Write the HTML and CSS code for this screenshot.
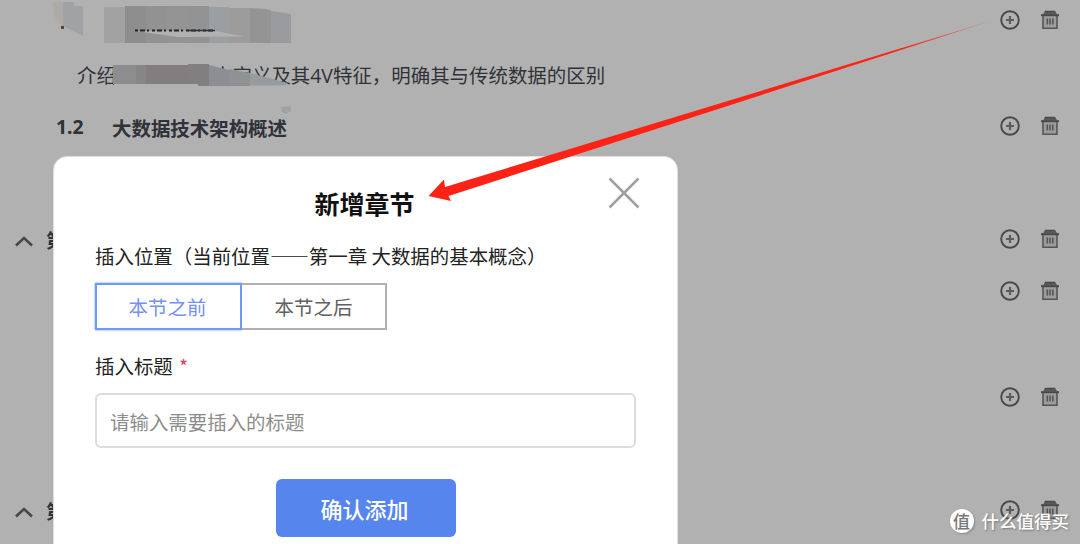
FILE: index.html
```html
<!DOCTYPE html>
<html lang="zh-CN">
<head>
  <meta charset="UTF-8">
  <title>新增章节</title>
  <link rel="stylesheet" href="styles.css">
</head>
<body>
  <svg class="defs">
    <symbol id="plus" viewBox="0 0 22 22">
      <circle cx="11" cy="11" r="8.8" fill="none" stroke="#484848" stroke-width="1.9"/>
      <path d="M11 7v8M7 11h8" stroke="#5c5c5c" stroke-width="2.2"/>
    </symbol>
    <symbol id="trash" viewBox="0 0 22 22">
      <path d="M4 7h14v12H4z" fill="#9c9c9c"/>
      <path d="M5.8 2h10.400l1.500 2.700 2.300.6v2H2v-2l2.700-.6z" fill="#585858"/>
      <path d="M6 2.300h9.800M2 6.300h18" stroke="#484848" stroke-width="1.300"/>
      <path d="M4 7v12.300h14V7M8.300 9.500v6M11 9.500v6M13.800 9.500v6" fill="none" stroke="#555" stroke-width="1.600"/>
    </symbol>
    <symbol id="up" viewBox="0 0 20 12">
      <path d="M2 10.500L10 3l8 7.500" fill="none" stroke="#484848" stroke-width="2.600"/>
    </symbol>
  </svg>

  <div class="outline">
    <div class="row first">
      <span class="num"></span>
      <span class="name"></span>
      <div class="tools"><svg><use href="#plus"/></svg><svg><use href="#trash"/></svg></div>
    </div>
    <div class="row desc">介绍大数据的基本定义及其4V特征，明确其与传统数据的区别</div>
    <div class="row sub">
      <span class="num">1.2</span>
      <span class="name">大数据技术架构概述</span>
      <div class="tools"><svg><use href="#plus"/></svg><svg><use href="#trash"/></svg></div>
    </div>
    <div class="row chapter">
      <svg class="fold"><use href="#up"/></svg>
      <span class="chapter-name">第</span>
      <div class="tools"><svg><use href="#plus"/></svg><svg><use href="#trash"/></svg></div>
    </div>
    <div class="row near">
      <div class="tools"><svg><use href="#plus"/></svg><svg><use href="#trash"/></svg></div>
    </div>
    <div class="row far">
      <div class="tools"><svg><use href="#plus"/></svg><svg><use href="#trash"/></svg></div>
    </div>
    <div class="row chapter">
      <svg class="fold"><use href="#up"/></svg>
      <span class="chapter-name">第</span>
      <div class="tools"><svg><use href="#plus"/></svg><svg><use href="#trash"/></svg></div>
    </div>
  </div>

  <!-- blurred out words -->
  <svg class="mosaic" width="320" height="120">
    <path d="M53 2h10v24q-9-6-10-15z" fill="#aeaba6"/>
    <path d="M63 2h11v4h9v30l-20-10z" fill="#a0a2a5"/>
    <path d="M61 26h3v3h-3z" fill="#5a4238"/>
    <path d="M104 7h21v36h-21z" fill="#a2a2a2"/>
    <path d="M125 6h21v37h-21z" fill="#8e8e8e"/>
    <path d="M146 6h21v37h-21z" fill="#929292"/>
    <path d="M167 6h21v37h-21z" fill="#949494"/>
    <path d="M188 6h21v37h-21z" fill="#929395"/>
    <path d="M209 7h20v36h-20z" fill="#9c9fa1"/>
    <path d="M229 8h21v35h-21z" fill="#9d9c9a"/>
    <path d="M250 8l16 1 5 1.500v32.500h-21z" fill="#949494"/>
    <path d="M271 11l20 3v29h-20z" fill="#9a9b9e"/>
    <path d="M135 31l75-1 35 6.500-67 .5z" fill="#b1b1b1"/>
    <path d="M135 30.500h80" stroke="#222" stroke-width="2" stroke-dasharray="3 2 5 2 2 3"/>
    <path d="M188 30.500h27" stroke="#333" stroke-width="1.500"/>
    <path d="M114 62h102v26h-102zM214 80h58v9h-58z" fill="#b1b1b1"/>
    <path d="M113 65h23v19h-23z" fill="#8d8d8d"/>
    <path d="M136 65h10v19h-10z" fill="#878585"/>
    <path d="M146 65h42v19h-42z" fill="#827e7f"/>
    <path d="M188 64h21v22h-11v-2h-10z" fill="#817f80"/>
    <path d="M209 65l20 5v16h-20z" fill="#8c8e93"/>
    <path d="M229 69l21 4v13h-21z" fill="#909193"/>
    <path d="M250 73l38 10-3 2.500h-35z" fill="#989b9e"/>
    <path d="M281 107l10-1v5l-5 3-4-2z" fill="#a0a2a4"/>
  </svg>

  <div class="modal">
    <svg class="close" viewBox="0 0 32 32"><path d="M1.500 1.500l29 29M30.500 1.500l-29 29" stroke="#a0a0a0" stroke-width="2.600"/></svg>
    <h2>新增章节</h2>
    <p class="label">插入位置（当前位置——第一章 大数据的基本概念）</p>
    <div class="tabs">
      <button class="tab active">本节之前</button>
      <button class="tab">本节之后</button>
    </div>
    <p class="label title-label">插入标题 <span class="star">*</span></p>
    <input class="title-input" type="text" placeholder="请输入需要插入的标题">
    <button class="confirm">确认添加</button>
  </div>

  <svg class="arrow" width="1080" height="230">
    <defs>
      <linearGradient id="fade" gradientUnits="userSpaceOnUse" x1="900" y1="0" x2="996" y2="0">
        <stop offset="0" stop-color="#fc2316"/>
        <stop offset="1" stop-color="#fc2316" stop-opacity="0.3"/>
      </linearGradient>
    </defs>
    <path d="M428.500 196L444 179.500l1 7.500L994 20 448.500 196l2.500 5z" fill="url(#fade)"/>
  </svg>

  <div class="watermark"><span class="logo">值</span>什么值得买</div>
</body>
</html>
```

FILE: styles.css
```css
body {
  margin: 0;
  width: 1080px;
  height: 544px;
  overflow: hidden;
  position: relative;
  background: #b1b1b1;
  font-family: "Noto Sans", "Noto Sans CJK SC", sans-serif;
  font-size: 19.45px;
  color: #303238;
}

.defs {
  display: none;
}

.row {
  display: flex;
  align-items: center;
  height: 40px;
  padding-right: 19px;
}

.desc {
  margin-top: 14px;
  padding-left: 77px;
  font-family: "Open Sans", "Noto Sans CJK SC", sans-serif;
}

.sub {
  margin-top: 12px;
  padding-left: 56px;
  font-weight: bold;
}

.num {
  width: 56px;
}

.sub .name {
  padding-top: 2px;
}

.chapter {
  margin-top: 73px;
  padding-left: 14px;
}

.near {
  margin-top: 12px;
}

.far {
  margin-top: 66px;
}

.fold {
  width: 20px;
  height: 12px;
  margin-right: 12px;
  padding-top: 3px;
}

.chapter-name {
  font-weight: bold;
}

.tools {
  display: flex;
  gap: 18px;
  margin-left: auto;
}

.tools svg {
  width: 22px;
  height: 22px;
}

.mosaic {
  position: absolute;
  left: 0;
  top: 0;
}

.modal {
  position: absolute;
  left: 53px;
  top: 156px;
  box-sizing: border-box;
  width: 625px;
  height: 410px;
  padding: 27px 42px 0;
  border: 1px solid #dedede;
  border-radius: 14px;
  background: #fff;
  color: #222;
  font-family: "Noto Sans CJK SC", sans-serif;
}

.close {
  position: absolute;
  right: 37px;
  top: 20px;
  width: 32px;
  height: 32px;
}

h2 {
  margin: 0 2px 0 0;
  font-size: 25px;
  line-height: 38px;
  text-align: center;
  color: #111;
}

.label {
  margin: 20px 0 0 -1px;
  line-height: 28px;
  white-space: nowrap;
}

.tabs {
  display: flex;
  margin: 13px 0 0 -1px;
}

button {
  font-family: inherit;
  border: none;
  padding: 0;
}

.tab {
  box-sizing: border-box;
  width: 145px;
  height: 47px;
  border: 2px solid #b0b0b0;
  border-left: none;
  background: #fff;
  color: #606060;
  font-size: 19.45px;
}

.tab.active {
  width: 147px;
  padding-right: 2px;
  border: 2px solid #6d9af8;
  box-shadow: 0 0 2px #6d9af8;
  color: #7390f5;
}

.title-label {
  margin-top: 22px;
}

.star {
  margin-left: 2px;
  color: #d8405f;
}

.title-input {
  display: block;
  box-sizing: border-box;
  width: 541px;
  height: 55px;
  margin: 13px 0 0 -1px;
  padding: 1px 13px 0;
  border: 2px solid #dcdcdc;
  border-radius: 6px;
  font-family: inherit;
  font-size: 19.45px;
}

.title-input::placeholder {
  color: #8c8c8c;
}

.confirm {
  display: block;
  width: 180px;
  height: 58px;
  margin: 31px auto 0;
  padding-right: 2px;
  border-radius: 6px;
  background: #5585ed;
  color: #fff;
  font-size: 22px;
  font-weight: 500;
}

.arrow {
  position: absolute;
  left: 0;
  top: 0;
}

.watermark {
  position: absolute;
  right: 11px;
  bottom: 8px;
  display: flex;
  align-items: center;
  gap: 8px;
  color: #fff;
  font-family: "Noto Sans CJK SC", sans-serif;
  font-size: 17.5px;
  font-weight: 500;
  line-height: 30px;
  text-shadow: 1px 1px 2px #777;
}

.logo {
  width: 24px;
  height: 24px;
  border-radius: 50%;
  background: #fff;
  color: #777;
  font-size: 17px;
  line-height: 23px;
  text-align: center;
  text-shadow: none;
  box-shadow: 1px 1px 2px #888;
}
```
